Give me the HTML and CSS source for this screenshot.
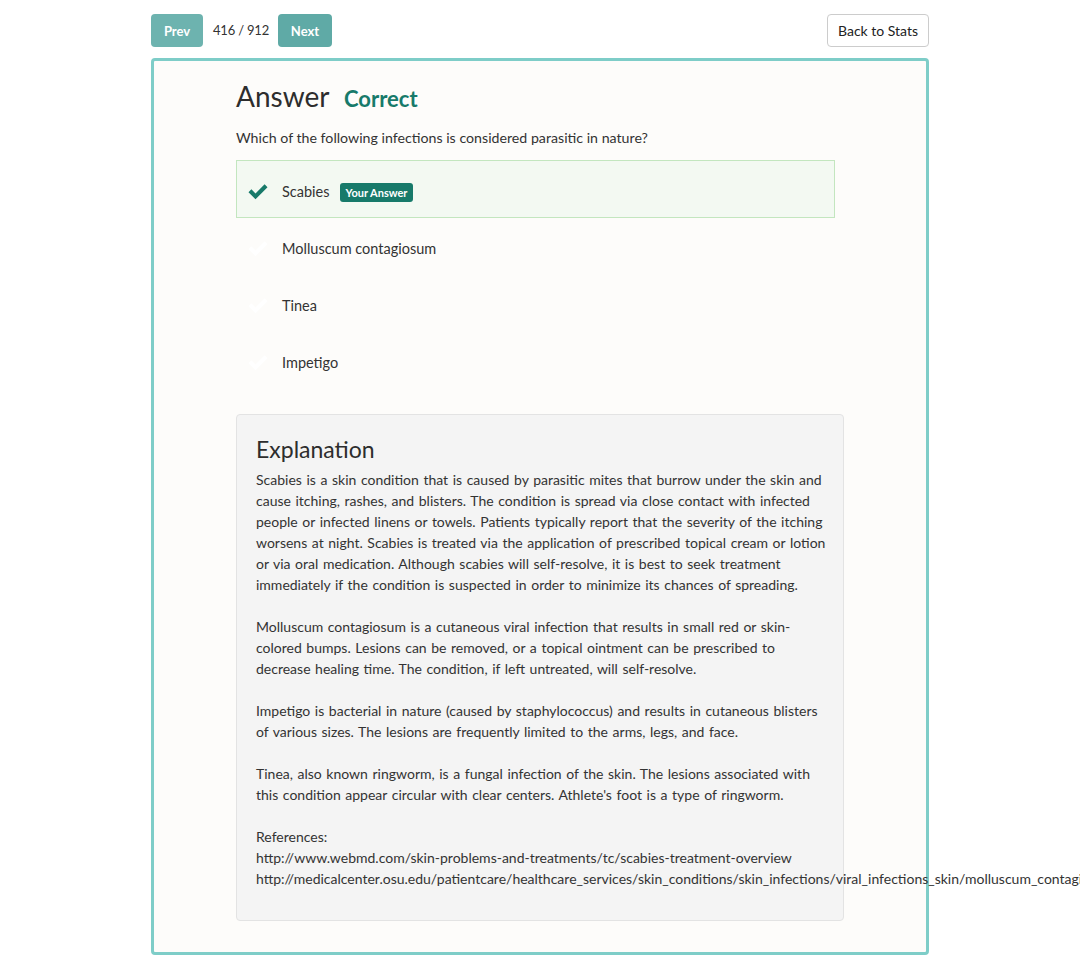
FILE: index.html
```html
<!DOCTYPE html>
<html>
<head>
<meta charset="utf-8">
<title>Answer</title>
<link rel="stylesheet" href="styles.css">
</head>
<body>
<div class="page">
  <div class="topbar">
    <div class="pager">
      <button class="btn btn-teal btn-prev">Prev</button>
      <span class="count">416 / 912</span>
      <button class="btn btn-teal btn-next">Next</button>
    </div>
    <button class="btn btn-outline">Back to Stats</button>
  </div>
  <div class="card">
    <div class="content">
      <h2 class="title">Answer <span class="status">Correct</span></h2>
      <p class="question">Which of the following infections is considered parasitic in nature?</p>
      <ul class="options">
        <li class="option selected">
          <svg class="check" viewBox="0 0 20 16" width="20" height="16"><path d="M0.5 8.2 L3.4 5.3 L7.5 9.4 L16.6 0.3 L19.5 3.2 L7.5 15.2 Z"/></svg>
          <span>Scabies</span>
          <span class="badge">Your Answer</span>
        </li>
        <li class="option">
          <svg class="check" viewBox="0 0 20 16" width="20" height="16"><path d="M0.5 8.2 L3.4 5.3 L7.5 9.4 L16.6 0.3 L19.5 3.2 L7.5 15.2 Z"/></svg>
          <span>Molluscum contagiosum</span>
        </li>
        <li class="option">
          <svg class="check" viewBox="0 0 20 16" width="20" height="16"><path d="M0.5 8.2 L3.4 5.3 L7.5 9.4 L16.6 0.3 L19.5 3.2 L7.5 15.2 Z"/></svg>
          <span>Tinea</span>
        </li>
        <li class="option">
          <svg class="check" viewBox="0 0 20 16" width="20" height="16"><path d="M0.5 8.2 L3.4 5.3 L7.5 9.4 L16.6 0.3 L19.5 3.2 L7.5 15.2 Z"/></svg>
          <span>Impetigo</span>
        </li>
      </ul>
      <div class="explanation">
        <h3>Explanation</h3>
        <p>Scabies is a skin condition that is caused by parasitic mites that burrow under the skin and cause itching, rashes, and blisters. The condition is spread via close contact with infected people or infected linens or towels. Patients typically report that the severity of the itching worsens at night. Scabies is treated via the application of prescribed topical cream or lotion or via oral medication. Although scabies will self-resolve, it is best to seek treatment immediately if the condition is suspected in order to minimize its chances of spreading.</p>
        <p>Molluscum contagiosum is a cutaneous viral infection that results in small red or skin-colored bumps. Lesions can be removed, or a topical ointment can be prescribed to decrease healing time. The condition, if left untreated, will self-resolve.</p>
        <p>Impetigo is bacterial in nature (caused by staphylococcus) and results in cutaneous blisters of various sizes. The lesions are frequently limited to the arms, legs, and face.</p>
        <p>Tinea, also known ringworm, is a fungal infection of the skin. The lesions associated with this condition appear circular with clear centers. Athlete's foot is a type of ringworm.</p>
        <p class="refs">References:<br><span class="url">http://www.webmd.com/skin-problems-and-treatments/tc/scabies-treatment-overview</span><br><span class="url">http://medicalcenter.osu.edu/patientcare/healthcare_services/skin_conditions/skin_infections/viral_infections_skin/molluscum_contagiosum/Pages/index.aspx</span></p>
      </div>
    </div>
  </div>
</div>
</body>
</html>
```

FILE: styles.css
```css
html, body {
  margin: 0;
  padding: 0;
  background: #ffffff;
  overflow-x: hidden;
}
body {
  font-family: "Lato", "Open Sans", sans-serif;
  font-size: 14px;
  color: #333333;
}
.page {
  width: 778px;
  margin: 0 auto;
  padding-top: 14px;
}
.topbar {
  display: flex;
  justify-content: space-between;
  align-items: center;
  height: 33px;
}
.pager {
  display: flex;
  align-items: center;
}
.btn {
  font-family: inherit;
  height: 33px;
  border-radius: 4px;
  cursor: pointer;
  padding: 0 12px;
  font-size: 14px;
}
.btn-teal {
  background: #6db3af;
  border: none;
  color: #ffffff;
  font-weight: 700;
  font-size: 13px;
}
.btn-prev { width: 52px; }
.btn-next { width: 54px; background: #5faaa6; }
.count {
  margin: 0 9px 0 10px;
  font-size: 13px;
  letter-spacing: -0.2px;
  position: relative;
  top: -1px;
}
.btn-outline {
  background: #ffffff;
  border: 1px solid #cccccc;
  color: #222222;
  width: 102px;
  padding: 0;
}
.card {
  margin-top: 11px;
  border: 3px solid #7ecdc8;
  border-radius: 4px;
  background: #fdfcfa;
  height: 891px;
}
.content {
  padding-left: 82px;
  padding-top: 16px;
}
.title {
  margin: 0;
  font-size: 28px;
  font-weight: 400;
  line-height: 38px;
  color: #2d2d2d;
}
.status {
  font-size: 22px;
  font-weight: 700;
  color: #177a6a;
  margin-left: 8px;
}
.question {
  margin: 10px 0 12px;
  line-height: 20px;
  font-size: 14.2px;
}
.options {
  list-style: none;
  margin: 0;
  padding: 0;
  width: 599px;
}
.option {
  display: flex;
  align-items: center;
  padding: 20px 11px 15px;
  line-height: 20px;
  border: 1px solid transparent;
  font-size: 14.5px;
}
.option.selected {
  background: #f3f9f2;
  border-color: #c3e6bf;
  padding-top: 21px;
  padding-bottom: 15px;
}
.check {
  fill: #ffffff;
  margin-right: 14px;
  flex: none;
}
.selected .check {
  fill: #177a6a;
}
.badge {
  background: #177a6a;
  color: #ffffff;
  font-size: 11px;
  font-weight: 700;
  line-height: 19px;
  padding: 0 6px;
  border-radius: 3px;
  margin-left: 10px;
}
.explanation {
  margin-top: 25px;
  width: 574px;
  padding: 18px 13px 31px 19px;
  background: #f4f4f4;
  border: 1px solid #e3e3e3;
  border-radius: 4px;
}
.explanation h3 {
  margin: 0 0 4px;
  font-size: 23px;
  font-weight: 400;
  line-height: 32px;
  color: #2d2d2d;
}
.explanation p {
  margin: 0 0 21px;
  line-height: 21px;
  word-spacing: 1px;
}
.explanation p.refs {
  margin-bottom: 0;
  word-spacing: 0;
}
.url {
  white-space: nowrap;
}
```
